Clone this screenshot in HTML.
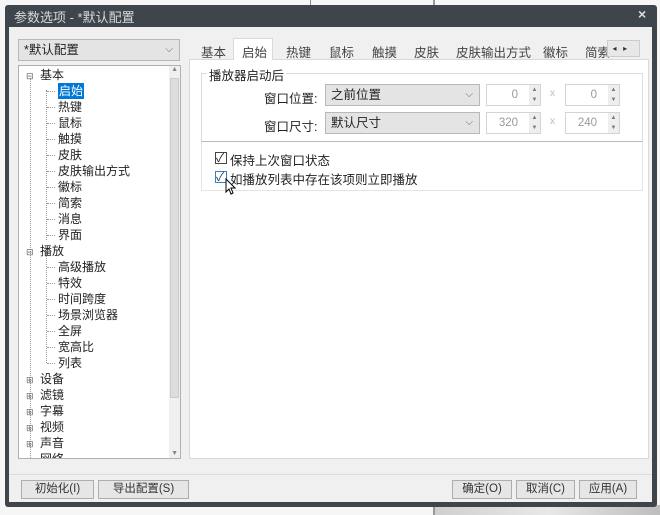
<!DOCTYPE html>
<html><head><meta charset="utf-8"><style>
*{margin:0;padding:0;box-sizing:border-box}
body{width:660px;height:515px;background:#f6f6f6;position:relative;overflow:hidden;font-family:"Liberation Sans","Noto Sans CJK SC",sans-serif;font-size:12px;color:#222}
.a{position:absolute}
.win{left:5px;top:5px;width:652px;height:502px;background:#3f454d;border-radius:3px}
.client{left:9px;top:27px;width:643px;height:475px;background:#f0f0f0}
.tree div{position:absolute;height:16px;line-height:16px;white-space:nowrap}
.btn{position:absolute;height:19px;border:1px solid #adadad;background:#e6e6e6;text-align:center;line-height:17px;font-size:11.5px;color:#333}
.combo{position:absolute;height:22px;border:1px solid #b8b8b8;background:#e4e4e4;line-height:20px;padding-left:5px;font-size:12.5px}
.spin{position:absolute;height:22px;border:1px solid #d4d4d4;background:#fff;color:#999;text-align:right;padding-right:22px;line-height:20px;font-size:11.5px}
.tab{position:absolute;top:42px;font-size:12.5px;color:#444}
.cb{position:absolute;width:12px;height:12px;border:1px solid #444;background:#fff}
.h{position:absolute;width:8px;height:0;border-top:1px dotted #999}
</style></head><body>
<div class="a" style="left:433px;top:0;width:2px;height:515px;background:#999"></div>
<div class="a" style="left:435px;top:505px;width:225px;height:10px;background:linear-gradient(90deg,#cfcfcf,#e8e8e8,#bdbdbd)"></div>
<div class="a" style="left:310px;top:0;width:1px;height:5px;background:#888"></div>
<div class="a win"></div>
<div class="a" style="left:14px;top:7px;color:#d8d8d8;font-size:13px">参数选项 - *默认配置</div>
<div class="a" style="left:638px;top:6px;color:#ddd;font-size:14px;font-weight:bold">×</div>
<div class="a client"></div>
<div class="combo" style="left:18px;top:39px;width:162px">*默认配置<span style="position:absolute;right:6px;top:0;color:#666;font-size:10px">⌵</span></div>
<div class="a" style="left:18px;top:65px;width:163px;height:394px;background:#fff;border:1px solid #b0b0b0;overflow:hidden">
 <div class="a" style="right:0;top:0;width:11px;height:392px;background:#f0f0f0"></div>
 <div class="a" style="right:1px;top:12px;width:9px;height:320px;background:#ddd;border:1px solid #ccc"></div>
 <div class="a" style="right:2px;top:0;font-size:7px;color:#888">▲</div>
 <div class="a" style="right:2px;bottom:1px;font-size:7px;color:#888">▼</div>
 <div class="a" style="left:11px;top:12px;width:0;height:380px;border-left:1px dotted #999"></div>
 <div class="a" style="left:27px;top:24px;width:0;height:150px;border-left:1px dotted #999"></div>
 <div class="a" style="left:27px;top:185px;width:0;height:112px;border-left:1px dotted #999"></div>
 <div class="h" style="left:28px;top:25px"></div><div class="h" style="left:28px;top:41px"></div><div class="h" style="left:28px;top:57px"></div>
 <div class="h" style="left:28px;top:73px"></div><div class="h" style="left:28px;top:89px"></div><div class="h" style="left:28px;top:105px"></div>
 <div class="h" style="left:28px;top:121px"></div><div class="h" style="left:28px;top:137px"></div><div class="h" style="left:28px;top:153px"></div>
 <div class="h" style="left:28px;top:169px"></div>
 <div class="h" style="left:28px;top:201px"></div><div class="h" style="left:28px;top:217px"></div><div class="h" style="left:28px;top:233px"></div>
 <div class="h" style="left:28px;top:249px"></div><div class="h" style="left:28px;top:265px"></div><div class="h" style="left:28px;top:281px"></div>
 <div class="h" style="left:28px;top:297px"></div>
 <div class="tree">
 <div style="left:7px;top:2px;font-size:9px;color:#666">⊟</div><div style="left:21px;top:1px">基本</div>
 <div style="left:39px;top:17px;background:#0078d7;color:#fff;padding:0 1px">启始</div>
 <div style="left:39px;top:33px">热键</div><div style="left:39px;top:49px">鼠标</div><div style="left:39px;top:65px">触摸</div>
 <div style="left:39px;top:81px">皮肤</div><div style="left:39px;top:97px">皮肤输出方式</div><div style="left:39px;top:113px">徽标</div>
 <div style="left:39px;top:129px">简索</div><div style="left:39px;top:145px">消息</div><div style="left:39px;top:161px">界面</div>
 <div style="left:7px;top:178px;font-size:9px;color:#666">⊟</div><div style="left:21px;top:177px">播放</div>
 <div style="left:39px;top:193px">高级播放</div><div style="left:39px;top:209px">特效</div><div style="left:39px;top:225px">时间跨度</div>
 <div style="left:39px;top:241px">场景浏览器</div><div style="left:39px;top:257px">全屏</div><div style="left:39px;top:273px">宽高比</div>
 <div style="left:39px;top:289px">列表</div>
 <div style="left:7px;top:306px;font-size:9px;color:#666">⊞</div><div style="left:21px;top:305px">设备</div>
 <div style="left:7px;top:322px;font-size:9px;color:#666">⊞</div><div style="left:21px;top:321px">滤镜</div>
 <div style="left:7px;top:338px;font-size:9px;color:#666">⊞</div><div style="left:21px;top:337px">字幕</div>
 <div style="left:7px;top:354px;font-size:9px;color:#666">⊞</div><div style="left:21px;top:353px">视频</div>
 <div style="left:7px;top:370px;font-size:9px;color:#666">⊞</div><div style="left:21px;top:369px">声音</div>
 <div style="left:21px;top:385px">网络</div>
 </div>
</div>
<div class="a" style="left:189px;top:59px;width:460px;height:400px;background:#fff;border:1px solid #d9d9d9"></div>
<div class="a" style="left:233px;top:38px;width:40px;height:22px;background:#fff;border:1px solid #d9d9d9;border-bottom:none"></div>
<div class="tab" style="left:201px">基本</div><div class="tab" style="left:242px">启始</div><div class="tab" style="left:286px">热键</div>
<div class="tab" style="left:329px">鼠标</div><div class="tab" style="left:372px">触摸</div><div class="tab" style="left:414px">皮肤</div>
<div class="tab" style="left:456px">皮肤输出方式</div><div class="tab" style="left:543px">徽标</div><div class="tab" style="left:585px">简索</div>
<div class="a" style="left:607px;top:40px;width:33px;height:17px;background:#e8e8e8;border:1px solid #ccc;font-size:8px;line-height:15px;color:#333">&nbsp;&nbsp;◂&nbsp;&nbsp;&nbsp;▸</div>
<div class="a" style="left:201px;top:73px;width:442px;height:69px;border:1px solid #ddd;border-bottom:1px solid #bbb"></div>
<div class="a" style="left:207px;top:65px;background:#fff;padding:0 2px;font-size:12.5px">播放器启动后</div>
<div class="a" style="left:201px;top:142px;width:442px;height:49px;border:1px solid #e4e4e4;border-top:none"></div>
<div class="a" style="left:264px;top:88px;font-size:12.5px">窗口位置:</div>
<div class="a" style="left:264px;top:116px;font-size:12.5px">窗口尺寸:</div>
<div class="combo" style="left:325px;top:84px;width:155px">之前位置<span style="position:absolute;right:6px;top:0;color:#666;font-size:10px">⌵</span></div>
<div class="combo" style="left:325px;top:112px;width:155px">默认尺寸<span style="position:absolute;right:6px;top:0;color:#666;font-size:10px">⌵</span></div>
<div class="spin" style="left:486px;top:84px;width:55px">0</div>
<div class="spin" style="left:565px;top:84px;width:55px">0</div>
<div class="spin" style="left:486px;top:112px;width:55px">320</div>
<div class="spin" style="left:565px;top:112px;width:55px">240</div>
<div class="a" style="left:529px;top:85px;width:11px;height:20px;background:#eee;font-size:6px;color:#777;text-align:center;line-height:10px">▲<br>▼</div>
<div class="a" style="left:608px;top:85px;width:11px;height:20px;background:#eee;font-size:6px;color:#777;text-align:center;line-height:10px">▲<br>▼</div>
<div class="a" style="left:529px;top:113px;width:11px;height:20px;background:#eee;font-size:6px;color:#777;text-align:center;line-height:10px">▲<br>▼</div>
<div class="a" style="left:608px;top:113px;width:11px;height:20px;background:#eee;font-size:6px;color:#777;text-align:center;line-height:10px">▲<br>▼</div>
<div class="a" style="left:550px;top:88px;color:#bbb;font-size:10px">x</div>
<div class="a" style="left:550px;top:116px;color:#bbb;font-size:10px">x</div>
<div class="cb" style="left:215px;top:152px"></div><div class="a" style="left:216px;top:149px;font-size:12px">✓</div>
<div class="a" style="left:230px;top:150px;font-size:12.5px">保持上次窗口状态</div>
<div class="cb" style="left:215px;top:171px;border-color:#3a80c0"></div><div class="a" style="left:216px;top:168px;font-size:12px;color:#246">✓</div>
<div class="a" style="left:230px;top:169px;font-size:12.5px">如播放列表中存在该项则立即播放</div>
<svg class="a" style="left:225px;top:178px" width="12" height="18" viewBox="0 0 12 18"><path d="M1 1 L1 14 L4 11 L6 16 L8 15 L6 10 L10 10 Z" fill="#fff" stroke="#000" stroke-width="1"/></svg>
<div class="a" style="left:9px;top:474px;width:643px;height:1px;background:#dcdcdc"></div>
<div class="btn" style="left:21px;top:480px;width:73px">初始化(I)</div>
<div class="btn" style="left:98px;top:480px;width:91px">导出配置(S)</div>
<div class="btn" style="left:452px;top:480px;width:60px">确定(O)</div>
<div class="btn" style="left:516px;top:480px;width:59px">取消(C)</div>
<div class="btn" style="left:579px;top:480px;width:58px">应用(A)</div>
</body></html>
